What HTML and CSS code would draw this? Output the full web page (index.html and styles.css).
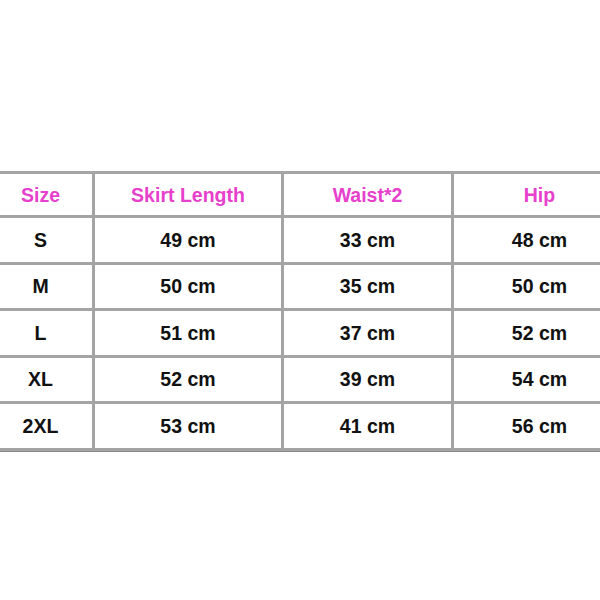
FILE: index.html
```html
<!DOCTYPE html>
<html>
<head>
<meta charset="utf-8">
<link rel="stylesheet" href="styles.css">
</head>
<body>
<div class="sheet">
  <div class="size-table">
    <div class="cell head">Size</div>
    <div class="cell head">Skirt Length</div>
    <div class="cell head">Waist*2</div>
    <div class="cell head">Hip</div>

    <div class="cell">S</div>
    <div class="cell">49 cm</div>
    <div class="cell">33 cm</div>
    <div class="cell">48 cm</div>

    <div class="cell">M</div>
    <div class="cell">50 cm</div>
    <div class="cell">35 cm</div>
    <div class="cell">50 cm</div>

    <div class="cell">L</div>
    <div class="cell">51 cm</div>
    <div class="cell">37 cm</div>
    <div class="cell">52 cm</div>

    <div class="cell">XL</div>
    <div class="cell">52 cm</div>
    <div class="cell">39 cm</div>
    <div class="cell">54 cm</div>

    <div class="cell">2XL</div>
    <div class="cell">53 cm</div>
    <div class="cell">41 cm</div>
    <div class="cell">56 cm</div>
  </div>
</div>
</body>
</html>
```
FILE: styles.css
```css
html, body {
  margin: 0;
  padding: 0;
  background: #ffffff;
}

body {
  width: 600px;
  height: 600px;
  overflow: hidden;
  font-family: "Liberation Sans", Arial, sans-serif;
}

.sheet {
  padding-top: 171px;
}

.size-table {
  display: grid;
  grid-template-columns: 103px 186px 167px 171px;
  grid-template-rows: 41px 44px 43px 44px 43px 44px;
  gap: 3px;
  padding: 3px;
  background: #a4a4a4;
  margin-left: -14px;
  width: max-content;
  border-bottom: 1px solid #8a8a8a;
}

.cell {
  background: #ffffff;
  display: flex;
  align-items: center;
  justify-content: center;
  font-size: 19.5px;
  font-weight: bold;
  color: #111111;
  padding-top: 0;
}

.head {
  color: #e640cc;
  padding-top: 1px;
}
```
